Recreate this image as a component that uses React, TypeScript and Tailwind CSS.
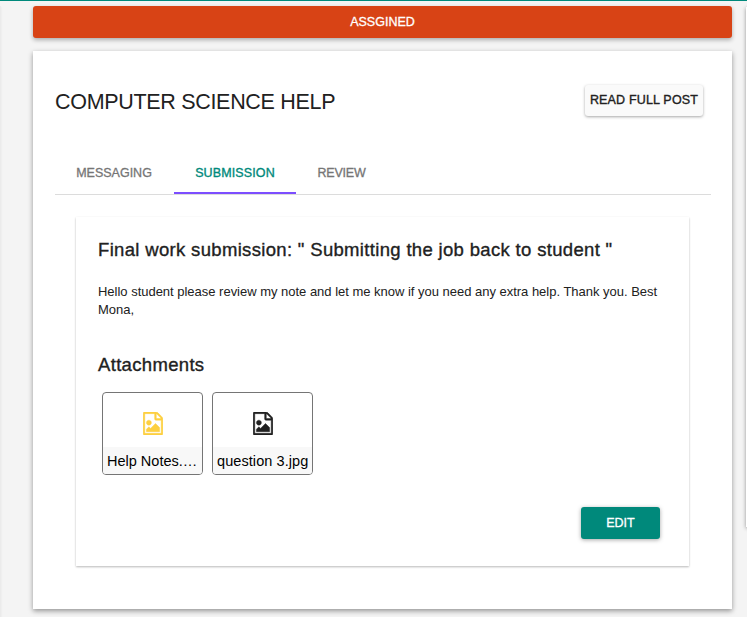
import React from "react";

function FileImageIcon({ className }: { className: string }) {
  return (
    <svg viewBox="0 0 1536 1792" className={className} fill="currentColor" stroke="currentColor" strokeWidth="36" aria-hidden="true">
      <path d="M1468 380q28 28 48 76t20 88v1152q0 40-28 68t-68 28h-1344q-40 0-68-28t-28-68v-1600q0-40 28-68t68-28h896q40 0 88 20t76 48zm-444-244v376h376q-10-29-22-41l-313-313q-12-12-41-22zm384 1528v-1024h-416q-40 0-68-28t-28-68v-416h-768v1536h1280zm-128-448v320h-1024v-192l192-192 128 128 384-384zm-832-192q-80 0-136-56t-56-136 56-136 136-56 136 56 56 136-56 136-136 56z" />
    </svg>
  );
}

function Attachment({ name, iconClass, nameClass }: { name: string; iconClass: string; nameClass: string }) {
  return (
    <div className="flex h-[83px] w-[101px] flex-col overflow-hidden rounded-[4px] border border-[#757575] bg-white">
      <div className="flex h-[54px] shrink-0 items-start justify-center pt-[19px]">
        <FileImageIcon className={iconClass} />
      </div>
      <div className="flex-1 whitespace-nowrap bg-[#f8f8f8] pl-1 text-[14.5px] leading-[28px] text-black">
        <span className={nameClass}>{name}</span>
      </div>
    </div>
  );
}

export default function App() {
  return (
    <div className="flex h-[617px] w-[747px] overflow-hidden border-t border-[#00897b] bg-[#f4f4f4] font-['Liberation_Sans',Arial,sans-serif] text-[#212121]">
      <aside className="mt-[5px] w-px shrink-0 bg-[#ebebeb] shadow-[0_1px_2px_rgba(0,0,0,0.1)]" />
      <main className="ml-[32px] mt-[5px] w-[699px] shrink-0">
        <div className="flex h-8 items-center justify-center rounded-[3px] bg-[#d84315] text-[12.5px] text-white shadow-[0_2px_4px_rgba(0,0,0,0.3)]">
          <span className="[-webkit-text-stroke:0.3px]">ASSGINED</span>
        </div>
        <section className="mt-[13px] h-[558px] bg-white px-[22px] pt-[34px] shadow-[0_2px_5px_rgba(0,0,0,0.4)]">
          <header className="flex items-start justify-between">
            <h1 className="pt-[3px] text-[21.5px] leading-[28px] tracking-[-0.31px]">COMPUTER SCIENCE HELP</h1>
            <button className="mr-[7px] flex h-[31px] w-[118px] items-center justify-center whitespace-nowrap rounded-[3px] bg-[#fafafa] text-[12.5px] shadow-[0_1px_3px_rgba(0,0,0,0.35)]">
              <span className="tracking-[0.17px] [-webkit-text-stroke:0.35px]">READ FULL POST</span>
            </button>
          </header>
          <nav className="mt-[35px] flex h-[44px] w-[656px] border-b border-[#dcdcdc] text-[12.5px] text-[#757575]">
            <div className="flex w-[118px] items-center justify-center">
              <span className="pt-[2px] [-webkit-text-stroke:0.3px]">MESSAGING</span>
            </div>
            <div className="ml-px flex w-[122px] items-center justify-center border-b-2 border-[#7c4dff] text-[#00897b]">
              <span className="pt-[4px] tracking-[0.12px] [-webkit-text-stroke:0.35px]">SUBMISSION</span>
            </div>
            <div className="flex w-[91px] items-center justify-center">
              <span className="pt-[2px] tracking-[-0.2px] [-webkit-text-stroke:0.3px]">REVIEW</span>
            </div>
          </nav>
          <article className="ml-[21px] mt-[22px] h-[349px] w-[613px] bg-white pl-[22px] pt-[20px] shadow-[0_1px_2px_rgba(0,0,0,0.28)]">
            <h2 className="whitespace-nowrap text-[18.5px] leading-[26px] tracking-[0.33px] [-webkit-text-stroke:0.35px]">
              Final work submission: " Submitting the job back to student "
            </h2>
            <p className="mt-[20px] whitespace-nowrap text-[13px] leading-[18px] tracking-[-0.015px]">
              Hello student please review my note and let me know if you need any extra help. Thank you. Best
              <br />
              Mona,
            </p>
            <h3 className="mt-[33px] text-[18.5px] leading-[26px] tracking-[0.33px] [-webkit-text-stroke:0.35px]">Attachments</h3>
            <div className="ml-1 mt-[14px] flex gap-[9px]">
              <Attachment name="Help Notes.…" iconClass="h-[23px] w-[20px] text-[#fdd040]" nameClass="" />
              <Attachment name="question 3.jpg" iconClass="h-[23px] w-[20px] text-[#212121]" nameClass="tracking-[0.08px]" />
            </div>
            <div className="mr-[29px] mt-[32px] flex justify-end">
              <button className="h-8 w-[79px] rounded-[3px] bg-[#00897b] text-[12.5px] text-white shadow-[0_1px_4px_rgba(0,0,0,0.35)]">
                <span className="[-webkit-text-stroke:0.3px]">EDIT</span>
              </button>
            </div>
          </article>
        </section>
      </main>
      <aside className="ml-[14px] mt-[6px] h-[520px] w-4 shrink-0 bg-white shadow-[0_1px_4px_rgba(0,0,0,0.4)]" />
    </div>
  );
}
